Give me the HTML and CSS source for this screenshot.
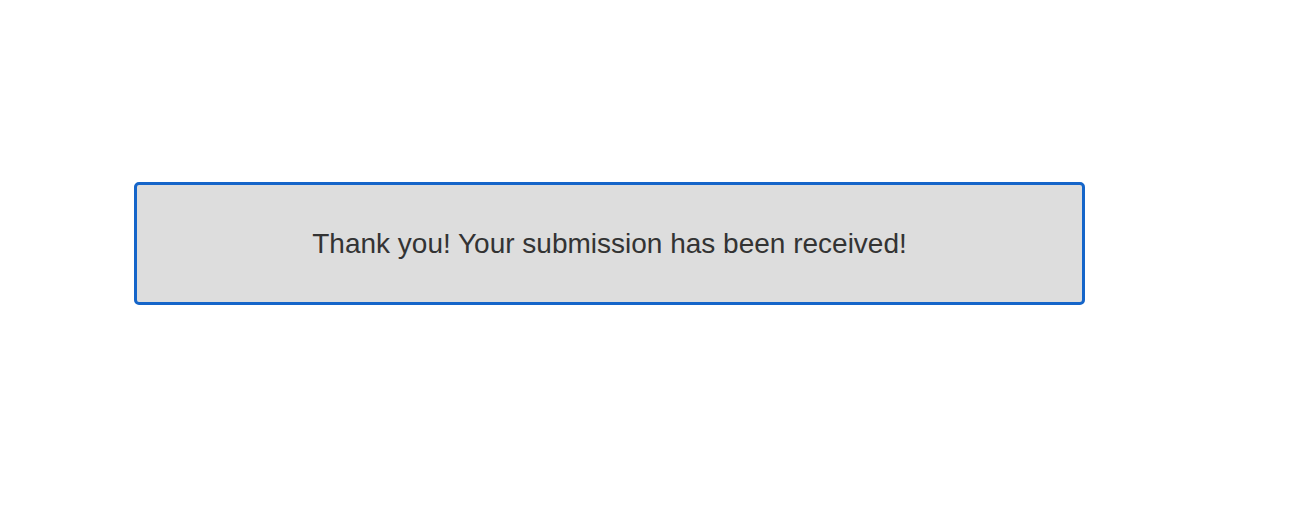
FILE: index.html
```html
<!DOCTYPE html>
<html>
<head>
<meta charset="utf-8">
<link rel="stylesheet" href="styles.css">
</head>
<body>
<div class="page">
  <div class="form-done">
    <div>Thank you! Your submission has been received!</div>
  </div>
</div>
</body>
</html>
```
FILE: styles.css
```css
html, body {
  margin: 0;
  padding: 0;
  background: #fff;
}
.page {
  padding: 182px 0 0 134px;
}
.form-done {
  box-sizing: border-box;
  width: 951px;
  height: 123px;
  border: 3px solid #1565c9;
  border-radius: 5px;
  background: #dddddd;
  display: flex;
  align-items: center;
  justify-content: center;
  font-family: "Liberation Sans", Arial, sans-serif;
  font-size: 28px;
  color: #333333;
}
```
